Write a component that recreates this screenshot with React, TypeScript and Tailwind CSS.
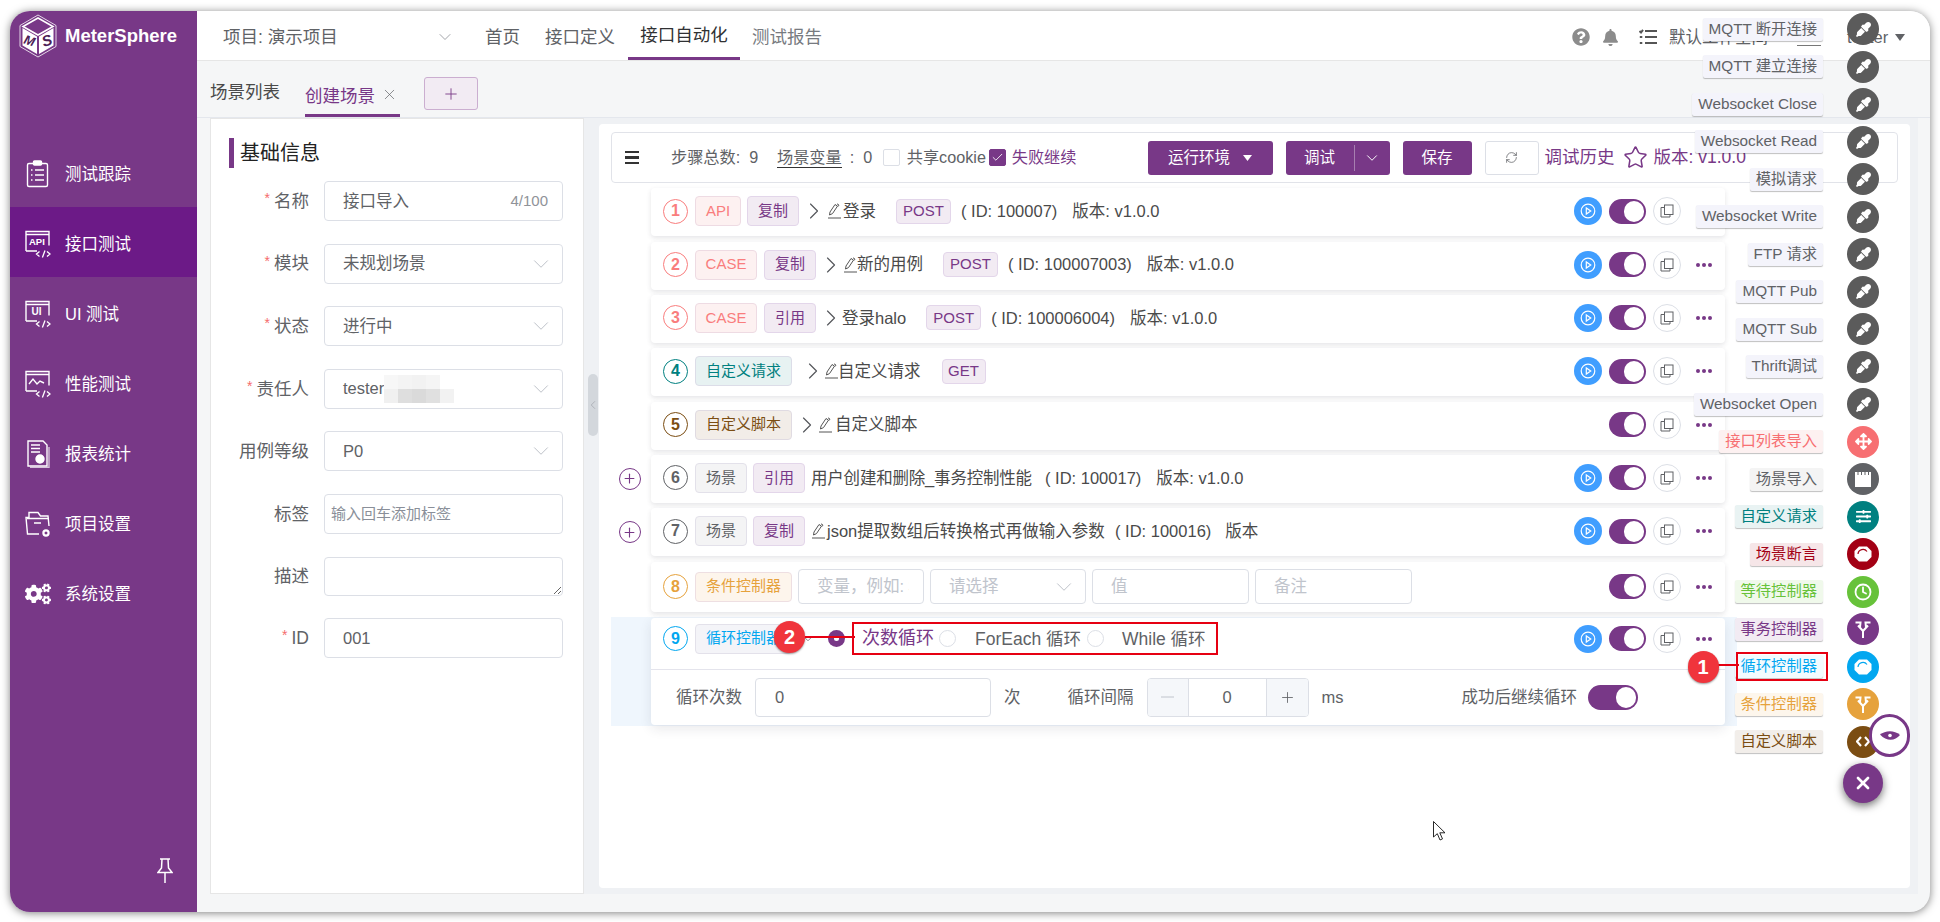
import type { ReactNode } from "react";
import { Check, ChevronDown, ChevronLeft, ChevronRight, Clock, Plus, RefreshCw, Star, X } from "lucide-react";
import { FaArrowsAlt, FaBell, FaCogs, FaEyeDropper, FaQuestionCircle, FaSlidersH } from "react-icons/fa";

const PURPLE = "#783887";

function Logo() {
  return (
    <svg width="40" height="44" viewBox="0 0 40 44" className="shrink-0">
      <polygon points="20,1 38,11.5 38,32.5 20,43 2,32.5 2,11.5" fill="none" stroke="#fff" strokeWidth="0.8" />
      <polygon points="20,4 35,12.5 20,21 5,12.5" fill={PURPLE} stroke="#fff" strokeWidth="1.6" />
      <polygon points="4.5,14 19,22.5 19,40 4.5,31.5" fill="#fff" />
      <polygon points="35.5,14 21,22.5 21,40 35.5,31.5" fill="#fff" />
      <text x="6" y="31" fontSize="13" fontWeight="700" fontStyle="italic" fill="#4b2156" transform="rotate(18 11 27)">M</text>
      <text x="24" y="32" fontSize="15" fontWeight="700" fontStyle="italic" fill="#4b2156" transform="rotate(-18 28 27)">S</text>
    </svg>
  );
}

function CodeBox({ children }: { children: ReactNode }) {
  return (
    <svg width="26" height="28" viewBox="0 0 26 28" fill="none" stroke="#fff" className="shrink-0">
      <path d="M1 21V1.5h23v14M1 4.5h23M1 21h11" strokeWidth="1.4" />
      <path d="M14.5 21.5l-3 2.5 3 2.5M22 21.5l3 2.5-3 2.5M20 20.5l-2.6 7" strokeWidth="1.3" />
      {children}
    </svg>
  );
}

const navItems: { label: string; icon: ReactNode; active?: boolean }[] = [
  {
    label: "测试跟踪",
    icon: (
      <svg width="26" height="28" viewBox="0 0 26 28" fill="none" stroke="#fff" strokeWidth="1.4" className="shrink-0">
        <rect x="2.5" y="3.5" width="20" height="23" rx="1.5" />
        <rect x="8.5" y="1" width="8" height="4" rx="1" fill="#fff" />
        <path d="M6 10h1.5M6 15h1.5M6 20h1.5M10 10h9M10 15h9M10 20h9" />
      </svg>
    ),
  },
  {
    label: "接口测试",
    active: true,
    icon: (
      <CodeBox>
        <text x="4" y="14.5" fontSize="9.5" fontWeight="700" fill="#fff" stroke="none">API</text>
      </CodeBox>
    ),
  },
  {
    label: "UI 测试",
    icon: (
      <CodeBox>
        <text x="6.5" y="15" fontSize="10" fontWeight="700" fill="#fff" stroke="none">UI</text>
      </CodeBox>
    ),
  },
  {
    label: "性能测试",
    icon: (
      <CodeBox>
        <path d="M4 14l4-5 4 5 3-3 4 2" strokeWidth="1.4" />
      </CodeBox>
    ),
  },
  {
    label: "报表统计",
    icon: (
      <svg width="26" height="28" viewBox="0 0 26 28" fill="none" stroke="#fff" strokeWidth="1.4" className="shrink-0">
        <path d="M3 1h15l4 4v21H3z" />
        <path d="M6 5h9M6 8.5h9M6 12h9" />
        <path d="M24 7v20.5H5" strokeOpacity="0.7" />
        <circle cx="15" cy="19" r="4" fill="#fff" />
      </svg>
    ),
  },
  {
    label: "项目设置",
    icon: (
      <svg width="26" height="28" viewBox="0 0 26 28" fill="none" stroke="#fff" strokeWidth="1.4" className="shrink-0">
        <path d="M14 24H2.5L1 7.5h3V2.5h9l2.5 3.5H23l1 10" />
        <path d="M2 8.5h22M9 13h7" />
        <circle cx="21" cy="23" r="2.6" strokeWidth="2.2" />
      </svg>
    ),
  },
  { label: "系统设置", icon: <FaCogs size={26} className="shrink-0 text-white" /> },
];

function Sidebar() {
  return (
    <aside className="flex h-full w-[187px] shrink-0 flex-col bg-[#783887] text-white">
      <div className="flex h-[50px] items-center pl-[8px]">
        <Logo />
        <span className="ml-[7px] text-[18.5px] leading-none font-bold">MeterSphere</span>
      </div>
      <nav className="mt-[76px] flex flex-col">
        {navItems.map((item) => (
          <div
            key={item.label}
            className={`flex h-[70px] items-center pt-[4px] pl-[15px] text-[16.5px] ${item.active ? "bg-[#6c1a87]" : ""}`}
          >
            {item.icon}
            <span className="ml-[14px]">{item.label}</span>
          </div>
        ))}
      </nav>
      <div className="mt-auto mr-[24px] mb-[29px] self-end">
        <svg width="16" height="25" viewBox="0 0 16 25" fill="none" stroke="#fff" strokeWidth="1.5">
          <path d="M3 1h10M5 1l-.5 9L1 14.5h14L11.5 10 11 1M8 14.5V25" />
        </svg>
      </div>
    </aside>
  );
}

function TopBar() {
  return (
    <header className="flex h-[50px] shrink-0 items-center border-b border-[#e6e6e6] bg-white pt-[3px] text-[17.5px] text-[#606266]">
      <div className="ml-[26px] flex w-[227px] items-center justify-between">
        <span>项目: 演示项目</span>
        <ChevronDown size={20} strokeWidth={1} className="mr-[-5px] text-[#909399]" />
      </div>
      <span className="ml-[35px]">首页</span>
      <span className="ml-[25px]">接口定义</span>
      <div className="ml-[13px] flex h-full w-[112px] items-center justify-center border-b-[3px] border-[#783887] text-[#303133]">
        接口自动化
      </div>
      <span className="ml-[12px] text-[#777a80]">测试报告</span>
      <FaQuestionCircle size={18} className="ml-[750px] text-[#8c8c8c]" />
      <FaBell size={17} className="ml-[12px] text-[#8c8c8c]" />
      <svg width="18" height="16" viewBox="0 0 18 16" className="ml-[20px]" fill="none" stroke="#555" strokeWidth="2">
        <path d="M6 2h12M6 8h12M6 14h12M0.5 2l1.5 1.5L4 .8M.8 8h2.5M.8 14h2.5" />
      </svg>
      <span className="ml-[12px] text-[16.5px]">默认工作空间</span>
      <div className="mt-[16px] ml-[29px] h-[1px] w-[24px] bg-[#777]" />
      <span className="ml-[26px] text-[16.5px]">tester</span>
      <svg width="10" height="7" viewBox="0 0 10 7" className="ml-[7px]" fill="#606266">
        <path d="M0 0h10L5 7z" />
      </svg>
    </header>
  );
}

function Tabs() {
  return (
    <div className="flex h-[57px] shrink-0 items-end border-b border-[#e4e7ed] text-[17.5px]">
      <span className="mb-[12px] ml-[13px] text-[#4a4a4a]">场景列表</span>
      <div className="ml-[25px] flex h-[45px] w-[95px] items-center border-b-[3px] border-[#783887] text-[#783887]">
        <span className="mt-[6px]">创建场景</span>
        <X size={17} strokeWidth={1} className="mt-[2px] ml-[6px] text-[#606266]" />
      </div>
      <div className="mb-[7px] ml-[24px] flex h-[33px] w-[54px] items-center justify-center rounded-[3px] border border-[#cbaed0] bg-[#f2ebf3] text-[#783887]">
        <Plus size={18} strokeWidth={1.2} />
      </div>
    </div>
  );
}

function Field({ label, required, children }: { label: string; required?: boolean; children: ReactNode }) {
  return (
    <div className="flex h-[40px] items-center">
      <div className="flex w-[98px] items-center justify-end text-[17.5px] text-[#606266]">
        {required && <span className="mt-[-5px] mr-[4px] text-[14px] text-[#f56c6c]">*</span>}
        {label}
      </div>
      <div className="ml-[15px] flex h-full w-[239px] items-center rounded-[4px] border border-[#dcdfe6] bg-white pr-[14px] pl-[18px] text-[16.5px] text-[#606266]">
        {children}
      </div>
    </div>
  );
}

function SelectText({ children }: { children: ReactNode }) {
  return (
    <>
      <span className="flex flex-1 items-center">{children}</span>
      <ChevronDown size={26} strokeWidth={0.8} className="mr-[-6px] shrink-0 text-[#b4b8c0]" />
    </>
  );
}

function BasicInfo() {
  return (
    <section className="h-[776px] w-[374px] shrink-0 border border-[#e6e6e6] bg-white">
      <div className="mt-[19px] ml-[18px] flex h-[30px] items-center">
        <div className="h-full w-[5px] bg-[#783887]" />
        <span className="ml-[6px] text-[20px] text-[#222]">基础信息</span>
      </div>
      <div className="mt-[13px] flex flex-col gap-[22.6px]">
        <Field label="名称" required>
          <span className="flex-1">接口导入</span>
          <span className="text-[15px] text-[#909399]">4/100</span>
        </Field>
        <Field label="模块" required>
          <SelectText>未规划场景</SelectText>
        </Field>
        <Field label="状态" required>
          <SelectText>进行中</SelectText>
        </Field>
        <Field label="责任人" required>
          <SelectText>
            tester
            <span className="grid h-[28px] w-[70px] grid-cols-5 grid-rows-2">
              <i className="bg-[#f7f7f7]" />
              <i className="bg-[#f4f4f4]" />
              <i className="bg-[#f2f2f2]" />
              <i className="bg-[#f5f5f5]" />
              <i className="bg-white" />
              <i className="bg-[#f0f0f0]" />
              <i className="bg-[#dedede]" />
              <i className="bg-[#dadada]" />
              <i className="bg-[#e0e0e0]" />
              <i className="bg-[#f2f2f2]" />
            </span>
          </SelectText>
        </Field>
        <Field label="用例等级">
          <SelectText>P0</SelectText>
        </Field>
        <div className="flex h-[40px] items-center">
          <div className="w-[98px] text-right text-[17.5px] text-[#606266]">标签</div>
          <div className="ml-[15px] flex h-full w-[239px] items-center rounded-[4px] border border-[#dcdfe6] pl-[6px] text-[15px] text-[#8a8f99]">
            输入回车添加标签
          </div>
        </div>
        <div className="flex h-[39px] items-center">
          <div className="w-[98px] text-right text-[17.5px] text-[#606266]">描述</div>
          <textarea className="ml-[15px] h-full w-[239px] rounded-[4px] border border-[#dcdfe6]" />
        </div>
        <Field label="ID" required>
          001
        </Field>
      </div>
    </section>
  );
}

function Checkbox({ checked }: { checked?: boolean }) {
  return (
    <span
      className={`flex h-[17px] w-[17px] shrink-0 items-center justify-center rounded-[2px] border ${
        checked ? "border-[#783887] bg-[#783887]" : "border-[#dcdfe6] bg-white"
      }`}
    >
      {checked && <Check size={13} strokeWidth={1.6} className="text-white" />}
    </span>
  );
}

function Toolbar() {
  return (
    <div className="flex h-[51px] w-[1287px] items-center rounded-[4px] border border-[#e1e3e9] text-[16.2px] whitespace-nowrap text-[#606266]">
      <div className="ml-[13px] flex w-[14px] flex-col gap-[3px]">
        <div className="h-[2.5px] bg-[#333]" />
        <div className="h-[2.5px] bg-[#333]" />
        <div className="h-[2.5px] bg-[#333]" />
      </div>
      <span className="ml-[32px] w-[91px]">步骤总数:&nbsp; 9</span>
      <span className="ml-[15px] border-b border-[#333] leading-[20px]">场景变量</span>
      <span className="ml-[8px] w-[22px]">:&nbsp; 0</span>
      <span className="ml-[11px]">
        <Checkbox />
      </span>
      <span className="ml-[7px] w-[79px]">共享cookie</span>
      <span className="ml-[3px]">
        <Checkbox checked />
      </span>
      <span className="ml-[6px] text-[#783887]">失败继续</span>
      <div className="ml-[71px] flex h-[34px] w-[125px] items-center justify-center rounded-[3px] bg-[#783887] text-[15.5px] text-white">
        运行环境
        <svg width="9" height="6" viewBox="0 0 9 6" className="ml-[13px]" fill="#fff">
          <path d="M0 0h9L4.5 6z" />
        </svg>
      </div>
      <div className="ml-[13px] flex h-[34px] w-[104px] items-center rounded-[3px] bg-[#783887] text-[15.5px] text-white">
        <span className="w-[68px] text-center">调试</span>
        <div className="h-[26px] w-px bg-[#a77fb0]" />
        <ChevronDown size={18} strokeWidth={1.3} className="ml-[8px]" />
      </div>
      <div className="ml-[13px] flex h-[34px] w-[69px] items-center justify-center rounded-[3px] bg-[#783887] text-[15.5px] text-white">
        保存
      </div>
      <div className="ml-[13px] flex h-[34px] w-[54px] items-center justify-center rounded-[3px] border border-[#dcdfe6]">
        <RefreshCw size={13} strokeWidth={1.4} className="text-[#606266]" />
      </div>
      <span className="ml-[6px] text-[17.5px] text-[#783887]">调试历史</span>
      <Star size={25} strokeWidth={1.5} className="ml-[8px] text-[#783887]" />
      <span className="ml-[6px] text-[17.5px] text-[#783887]">版本: v1.0.0</span>
    </div>
  );
}

type TagTone = "red" | "purple" | "teal" | "brown" | "gray" | "orange" | "blue";

const tagTones: Record<TagTone, string> = {
  red: "bg-[#fdf1f1] border-[#eedbe3] text-[#f97d7d]",
  purple: "bg-[#f2ebf3] border-[#e3d6ea] text-[#783887]",
  teal: "bg-[#e7f2f2] border-[#dcdde8] text-[#008080]",
  brown: "bg-[#f2ede8] border-[#e0dbe2] text-[#7b4d12]",
  gray: "bg-[#f4f4f5] border-[#e3e1ea] text-[#606266]",
  orange: "bg-[#fdf5ec] border-[#eedfe2] text-[#e6a23c]",
  blue: "bg-[#f4f4f8] border-[#e3e1ea] text-[#02a7f0]",
};

function Tag({ tone, w, className = "", children }: { tone: TagTone; w: string; className?: string; children: ReactNode }) {
  return (
    <span
      className={`flex h-[30px] shrink-0 items-center justify-center rounded-[4px] border text-[15px] whitespace-nowrap ${tagTones[tone]} ${w} ${className}`}
    >
      {children}
    </span>
  );
}

function Num({ n, color }: { n: number; color: string }) {
  return (
    <span
      className={`flex h-[25px] w-[25px] shrink-0 items-center justify-center rounded-full border text-[16px] font-bold ${color}`}
    >
      {n}
    </span>
  );
}

// lucide chevron has a lot of air round it, so pull the box in with a negative margin
function Arrow({ className = "" }: { className?: string }) {
  return <ChevronRight size={28} strokeWidth={1} className={`mr-[-10.5px] shrink-0 text-[#55575c] ${className}`} />;
}

function Pencil({ className = "" }: { className?: string }) {
  return (
    <svg width="13" height="16" viewBox="0 0 13 16" fill="none" stroke="#555" strokeWidth="1" className={`shrink-0 ${className}`}>
      <path d="M1.5 12l.5-3 5-7.5 2.5 1.6-5 7.5zM9 .8l2 1.3-1 1.4M0 15h13" />
    </svg>
  );
}

function Method({ children, w, className = "" }: { children: ReactNode; w: string; className?: string }) {
  return (
    <span
      className={`flex h-[25px] shrink-0 items-center justify-center rounded-[4px] border border-[#e3d6ea] bg-[#f2ebf3] text-[15px] text-[#783887] ${w} ${className}`}
    >
      {children}
    </span>
  );
}

function Toggle({ wide }: { wide?: boolean }) {
  return (
    <span
      className={`flex h-[25px] shrink-0 items-center justify-end rounded-full bg-[#783887] pr-[2px] ${wide ? "w-[50px]" : "w-[37px]"}`}
    >
      <span className="h-[21px] w-[20px] rounded-full bg-white" />
    </span>
  );
}

function Actions({ play = true }: { play?: boolean }) {
  return (
    <div className="ml-auto flex items-center pr-[13px]">
      {play && (
        <span className="flex h-[28px] w-[28px] items-center justify-center rounded-full bg-[#409eff]">
          <svg width="16" height="16" viewBox="0 0 16 16" fill="none" stroke="#fff" strokeWidth="1.2">
            <circle cx="8" cy="8" r="6.8" />
            <path d="M6.3 5v6l4.4-3z" />
          </svg>
        </span>
      )}
      <span className="ml-[7px]">
        <Toggle />
      </span>
      <span className="ml-[7px] flex h-[28px] w-[28px] items-center justify-center rounded-full border border-[#dcdfe6] bg-white">
        <svg width="14" height="14" viewBox="0 0 14 14" fill="none" stroke="#606266" strokeWidth="1">
          <rect x="4.5" y="1" width="8.5" height="9.5" />
          <path d="M4.5 3.5H1V13h9v-2.5" />
        </svg>
      </span>
      <span className="ml-[15px] flex w-[16px] justify-between">
        <i className="h-[4px] w-[4px] rounded-full bg-[#783887]" />
        <i className="h-[4px] w-[4px] rounded-full bg-[#783887]" />
        <i className="h-[4px] w-[4px] rounded-full bg-[#783887]" />
      </span>
    </div>
  );
}

function StepRow({ h, plus, children }: { h: string; plus?: boolean; children: ReactNode }) {
  return (
    <div className="mt-[5.33px] flex items-center">
      <div className="flex w-[40px] justify-center pr-[3px]">
        {plus && (
          <span className="flex h-[22px] w-[22px] items-center justify-center rounded-full border border-[#783887] text-[#783887]">
            <Plus size={15} strokeWidth={1.8} />
          </span>
        )}
      </div>
      <div
        className={`flex w-[1074px] items-center rounded-[4px] bg-white pl-[12px] text-[16.5px] whitespace-nowrap text-[#4a4a4a] shadow-[0_2px_5px_rgba(40,40,60,0.12)] ${h}`}
      >
        {children}
      </div>
    </div>
  );
}

function GhostInput({ w, children }: { w: string; children?: ReactNode }) {
  return (
    <div className={`ml-[6px] flex h-[35px] items-center rounded-[4px] border border-[#dcdfe6] pr-[14px] pl-[18px] text-[#c0c4cc] ${w}`}>
      {children}
    </div>
  );
}

function Steps() {
  return (
    <>
      <StepRow h="h-[48px] pb-[2px]">
        <Num n={1} color="border-[#f97d7d] text-[#f97d7d]" />
        <Tag tone="red" w="w-[46px]" className="ml-[7px]">API</Tag>
        <Tag tone="purple" w="w-[52px]" className="ml-[6px]">复制</Tag>
        <Arrow className="ml-[0.5px]" />
        <Pencil className="ml-[11px]" />
        <span className="ml-[2px]">登录</span>
        <Method w="w-[55px]" className="ml-[20px]">POST</Method>
        <span className="ml-[10px]">( ID: 100007)</span>
        <span className="ml-[15px]">版本: v1.0.0</span>
        <Actions />
      </StepRow>
      <StepRow h="h-[48px] pb-[2px]">
        <Num n={2} color="border-[#f97d7d] text-[#f97d7d]" />
        <Tag tone="red" w="w-[62px]" className="ml-[7px]">CASE</Tag>
        <Tag tone="purple" w="w-[52px]" className="ml-[7px]">复制</Tag>
        <Arrow className="ml-[0.5px]" />
        <Pencil className="ml-[10px]" />
        <span>新的用例</span>
        <Method w="w-[55px]" className="ml-[20px]">POST</Method>
        <span className="ml-[10px]">( ID: 100007003)</span>
        <span className="ml-[15px]">版本: v1.0.0</span>
        <Actions />
      </StepRow>
      <StepRow h="h-[48px] pb-[2px]">
        <Num n={3} color="border-[#f97d7d] text-[#f97d7d]" />
        <Tag tone="red" w="w-[62px]" className="ml-[7px]">CASE</Tag>
        <Tag tone="purple" w="w-[52px]" className="ml-[7px]">引用</Tag>
        <Arrow className="ml-[0.5px]" />
        <span className="ml-[8px]">登录halo</span>
        <Method w="w-[55px]" className="ml-[20px]">POST</Method>
        <span className="ml-[10px]">( ID: 100006004)</span>
        <span className="ml-[15px]">版本: v1.0.0</span>
        <Actions />
      </StepRow>
      <StepRow h="h-[48px] pb-[2px]">
        <Num n={4} color="border-[#008080] text-[#008080]" />
        <Tag tone="teal" w="w-[97px]" className="ml-[7px]">自定义请求</Tag>
        <Arrow className="ml-[6.5px]" />
        <Pencil className="ml-[9px]" />
        <span>自定义请求</span>
        <Method w="w-[44px]" className="ml-[21px]">GET</Method>
        <Actions />
      </StepRow>
      <StepRow h="h-[48px] pb-[2px]">
        <Num n={5} color="border-[#7b4d12] text-[#7b4d12]" />
        <Tag tone="brown" w="w-[97px]" className="ml-[7px]">自定义脚本</Tag>
        <Arrow className="ml-[0.5px]" />
        <Pencil className="ml-[9px]" />
        <span className="ml-[3px]">自定义脚本</span>
        <Actions play={false} />
      </StepRow>
      <StepRow h="h-[48px] pb-[2px]" plus>
        <Num n={6} color="border-[#606266] text-[#606266]" />
        <Tag tone="gray" w="w-[52px]" className="ml-[7px]">场景</Tag>
        <Tag tone="purple" w="w-[52px]" className="ml-[6px]">引用</Tag>
        <span className="ml-[6px] w-[220px] tracking-[-0.2px]">用户创建和删除_事务控制性能</span>
        <span className="ml-[14px]">( ID: 100017)</span>
        <span className="ml-[15px]">版本: v1.0.0</span>
        <Actions />
      </StepRow>
      <StepRow h="h-[48px] pb-[2px]" plus>
        <Num n={7} color="border-[#606266] text-[#606266]" />
        <Tag tone="gray" w="w-[52px]" className="ml-[7px]">场景</Tag>
        <Tag tone="purple" w="w-[52px]" className="ml-[6px]">复制</Tag>
        <Pencil className="ml-[7px]" />
        <span className="ml-[2px] w-[274px]">json提取数组后转换格式再做输入参数</span>
        <span className="ml-[14px]">( ID: 100016)</span>
        <span className="ml-[14px]">版本</span>
        <Actions />
      </StepRow>
      <StepRow h="h-[50px]">
        <Num n={8} color="border-[#e6a23c] text-[#e6a23c]" />
        <Tag tone="orange" w="w-[97px]" className="ml-[7px]">条件控制器</Tag>
        <GhostInput w="w-[126px]">
          <span className="w-[92px] overflow-hidden">变量，例如: $</span>
        </GhostInput>
        <GhostInput w="w-[156px]">
          <span className="flex-1">请选择</span>
          <ChevronDown size={26} strokeWidth={0.8} className="mr-[-6px] shrink-0 text-[#b4b8c0]" />
        </GhostInput>
        <GhostInput w="w-[157px]">值</GhostInput>
        <GhostInput w="w-[157px]">备注</GhostInput>
        <Actions play={false} />
      </StepRow>
      <LoopRow />
    </>
  );
}

function Radio({ className = "" }: { className?: string }) {
  return <span className={`h-[17px] w-[17px] shrink-0 rounded-full border border-[#dcdfe6] bg-white ${className}`} />;
}

function LoopRow() {
  return (
    <div className="mt-[5px] flex h-[109px] w-[1126px] items-center bg-[#eff6fd]">
      <div className="w-[40px]" />
      <div className="relative h-[107px] w-[1074px] rounded-[4px] bg-white text-[16.5px] whitespace-nowrap text-[#606266] shadow-[0_4px_12px_rgba(40,40,60,0.1)]">
        <div className="flex h-[52px] items-center border-b border-[#e4e4ec] pb-[9px] pl-[12px]">
          <Num n={9} color="border-[#02a7f0] text-[#02a7f0]" />
          <Tag tone="blue" w="w-[97px]" className="ml-[7px] justify-start pl-[10px]">循环控制器</Tag>
          <ChevronDown size={14} strokeWidth={1.3} className="ml-[9px] text-[#606266]" />
          <span className="ml-[13px] flex h-[17px] w-[17px] items-center justify-center rounded-full bg-[#783887]">
            <i className="h-[5px] w-[5px] rounded-full bg-white" />
          </span>
          <div className="ml-[7px] flex h-[33px] w-[366px] items-center border-2 border-[#e60012] pl-[8px] text-[17.5px]">
            <span className="text-[18px] text-[#783887]">次数循环</span>
            <Radio className="ml-[5px]" />
            <span className="ml-[19px]">ForEach 循环</span>
            <Radio className="ml-[6px]" />
            <span className="ml-[18px]">While 循环</span>
          </div>
          <Actions />
        </div>
        <div className="flex h-[55px] items-center">
          <span className="ml-[25px]">循环次数</span>
          <div className="ml-[13px] flex h-[39px] w-[236px] items-center rounded-[4px] border border-[#dcdfe6] pl-[19px]">0</div>
          <span className="ml-[13px]">次</span>
          <span className="ml-[47px]">循环间隔</span>
          <div className="ml-[13px] flex h-[39px] w-[162px] items-center overflow-hidden rounded-[4px] border border-[#dcdfe6]">
            <div className="flex h-full w-[41px] items-center justify-center border-r border-[#dcdfe6] bg-[#f5f7fa] text-[#c0c4cc]">
              <svg width="13" height="2"><path d="M0 1h13" stroke="#c0c4cc" /></svg>
            </div>
            <div className="flex-1 text-center">0</div>
            <div className="flex h-full w-[42px] items-center justify-center border-l border-[#dcdfe6] bg-[#f5f7fa]">
              <Plus size={17} strokeWidth={1.2} />
            </div>
          </div>
          <span className="ml-[13px]">ms</span>
          <span className="ml-[118px]">成功后继续循环</span>
          <span className="ml-[11px]">
            <Toggle wide />
          </span>
        </div>
        <div className="absolute top-[3px] left-[123px] flex items-center">
          <span className="flex h-[32px] w-[31px] items-center justify-center rounded-full bg-[#f0343c] text-[20px] font-bold text-white shadow-[0_1px_2px_rgba(0,0,0,0.4)]">2</span>
          <span className="h-[2px] w-[50px] bg-[#e60012]" />
        </div>
      </div>
    </div>
  );
}

const fork = (
  <svg width="16" height="18" viewBox="0 0 16 18" fill="none" stroke="#fff" strokeWidth="2">
    <path d="M8 18v-7L3 5.500M8 11l5-5.500M.5 2.500h5l-.5 5M15.500 2.500h-5l.5 5" />
  </svg>
);

function gauge(color: string) {
  return (
    <svg width="18" height="16" viewBox="0 0 18 16">
      <path d="M5 .5h8l4.500 4.500v6L13 15.500H5L.5 11V5z" fill="#fff" />
      <path d="M4 8a5 5 0 0 1 9-2.500" fill="none" stroke={color} strokeWidth="1.2" />
    </svg>
  );
}

const dropper = <FaEyeDropper size={15} className="text-white" />;

const fabs: { label: string; text: string; bg: string; circle: string; icon: ReactNode; focus?: boolean }[] = [
  { label: "MQTT 断开连接", text: "text-[#606266]", bg: "bg-[#f4f4fb]", circle: "bg-[#5b5b5b]", icon: dropper },
  { label: "MQTT 建立连接", text: "text-[#606266]", bg: "bg-[#f4f4fb]", circle: "bg-[#5b5b5b]", icon: dropper },
  { label: "Websocket Close", text: "text-[#606266]", bg: "bg-[#f4f4fb]", circle: "bg-[#5b5b5b]", icon: dropper },
  { label: "Websocket Read", text: "text-[#606266]", bg: "bg-[#f4f4fb]", circle: "bg-[#5b5b5b]", icon: dropper },
  { label: "模拟请求", text: "text-[#606266]", bg: "bg-[#f4f4fb]", circle: "bg-[#5b5b5b]", icon: dropper },
  { label: "Websocket Write", text: "text-[#606266]", bg: "bg-[#f4f4fb]", circle: "bg-[#5b5b5b]", icon: dropper },
  { label: "FTP 请求", text: "text-[#606266]", bg: "bg-[#f4f4fb]", circle: "bg-[#5b5b5b]", icon: dropper },
  { label: "MQTT Pub", text: "text-[#606266]", bg: "bg-[#f4f4fb]", circle: "bg-[#5b5b5b]", icon: dropper },
  { label: "MQTT Sub", text: "text-[#606266]", bg: "bg-[#f4f4fb]", circle: "bg-[#5b5b5b]", icon: dropper },
  { label: "Thrift调试", text: "text-[#606266]", bg: "bg-[#f4f4fb]", circle: "bg-[#5b5b5b]", icon: dropper },
  { label: "Websocket Open", text: "text-[#606266]", bg: "bg-[#f4f4fb]", circle: "bg-[#5b5b5b]", icon: dropper },
  { label: "接口列表导入", text: "text-[#f76f72]", bg: "bg-[#fdf1f1]", circle: "bg-[#f76f72]", icon: <FaArrowsAlt size={17} className="text-white" /> },
  {
    label: "场景导入",
    text: "text-[#606266]",
    bg: "bg-[#f4f4f4]",
    circle: "bg-[#606266]",
    icon: (
      <svg width="16" height="15" viewBox="0 0 16 15">
        <path d="M0 0h16v15H0z" fill="#fff" />
        <path d="M3 0v3M6.500 0v3M10 0v3M13.500 0v3" stroke="#606266" />
      </svg>
    ),
  },
  { label: "自定义请求", text: "text-[#008080]", bg: "bg-[#e9f3f3]", circle: "bg-[#008080]", icon: <FaSlidersH size={15} className="text-white" /> },
  { label: "场景断言", text: "text-[#a30014]", bg: "bg-[#f6e6e8]", circle: "bg-[#a30014]", icon: gauge("#a30014") },
  { label: "等待控制器", text: "text-[#67c23a]", bg: "bg-[#f0f9eb]", circle: "bg-[#67c23a]", icon: <Clock size={18} strokeWidth={2.4} className="text-white" /> },
  { label: "事务控制器", text: "text-[#783887]", bg: "bg-[#f2ebf3]", circle: "bg-[#783887]", icon: fork },
  { label: "循环控制器", text: "text-[#02a7f0]", bg: "bg-[#f3fbfe]", circle: "bg-[#02a7f0]", icon: gauge("#02a7f0"), focus: true },
  { label: "条件控制器", text: "text-[#e6a23c]", bg: "bg-[#fdf6ec]", circle: "bg-[#e6a23c]", icon: fork },
  {
    label: "自定义脚本",
    text: "text-[#7b4d12]",
    bg: "bg-[#f2eeea]",
    circle: "bg-[#7b4d12]",
    icon: (
      <svg width="14" height="11" viewBox="0 0 14 11" fill="none" stroke="#fff" strokeWidth="2.2">
        <path d="M5 1L1 5.500 5 10M9 1l4 4.500L9 10" />
      </svg>
    ),
  },
];

function FabMenu() {
  return (
    <>
      <div className="absolute top-[2px] right-[51px] flex flex-col items-end gap-[5.5px]">
        {fabs.map((fab) => (
          <div key={fab.label} className="flex h-[32px] items-center">
            <span
              className={`relative flex h-[23px] items-center rounded-[2px] px-[6px] text-[15.3px] shadow-[0_1px_1px_rgba(0,0,0,0.25)] ${fab.text} ${fab.bg}`}
            >
              {fab.label}
              {fab.focus && (
                <>
                  <span className="absolute top-[-3px] right-[-5px] bottom-[-3px] left-[1px] border-2 border-[#e60012]" />
                  <span className="absolute top-[9px] left-[-20px] h-[2px] w-[24px] bg-[#e60012]" />
                  <span className="absolute top-[-4px] left-[-47px] flex h-[32px] w-[31px] items-center justify-center rounded-full bg-[#f0343c] text-[20px] font-bold text-white shadow-[0_1px_2px_rgba(0,0,0,0.4)]">
                    1
                  </span>
                </>
              )}
            </span>
            <span className={`ml-[24px] flex h-[32px] w-[32px] items-center justify-center rounded-full ${fab.circle}`}>
              {fab.icon}
            </span>
          </div>
        ))}
      </div>
      <div className="absolute top-[703px] left-[1859px] flex h-[43px] w-[41px] items-center justify-center rounded-full border-[3px] border-[#783887] bg-white">
        <svg width="20" height="12" viewBox="0 0 20 12">
          <path d="M0 4.500C5 .5 14 -.5 20 5c-5 6-13 7-20-.5z" fill="#783887" />
          <circle cx="10" cy="5.500" r="1.800" fill="#fff" />
        </svg>
      </div>
      <div className="absolute top-[752px] left-[1833px] flex h-[40px] w-[40px] items-center justify-center rounded-full bg-[#783887] text-white shadow-[0_3px_8px_rgba(0,0,0,0.55)]">
        <X size={20} strokeWidth={3.2} />
      </div>
      <svg width="13" height="20" viewBox="0 0 13 20" className="absolute top-[810px] left-[1423px]" fill="#fff" stroke="#111" strokeWidth="0.9">
        <path d="M.5.5v15.500l3.800-3.300 2.700 6.300 2.500-1.100-2.700-6.100h5.200z" />
      </svg>
    </>
  );
}

export default function App() {
  return (
    <div className="h-[922px] w-[1940px] overflow-hidden bg-white pt-[11px] pl-[10px] [font-family:'Liberation_Sans','Noto_Sans_CJK_SC',sans-serif]">
      <div className="relative flex h-[901px] w-[1920px] overflow-hidden rounded-[20px] bg-[#f5f6f7] shadow-[0_1px_9px_rgba(0,0,0,0.5)]">
        <Sidebar />
        <main className="flex min-w-0 flex-1 flex-col">
          <TopBar />
          <Tabs />
          <div className="flex pl-[13px]">
            <BasicInfo />
            <div className="h-[776px] w-[1334px] bg-[#eff1f4]">
              <div className="flex h-full">
                <div className="mt-[256px] ml-[4px] flex h-[62px] w-[10px] items-center justify-center rounded-[5px] bg-[#d3d7dc] text-white">
                  <ChevronLeft size={14} strokeWidth={1.2} className="shrink-0 text-[#a0a4ab]" />
                </div>
                <div className="mt-[6px] ml-px h-[764px] w-[1311px] rounded-[4px] bg-white pt-[8px] pl-[12px]">
                  <Toolbar />
                  <Steps />
                </div>
              </div>
            </div>
          </div>
        </main>
        <FabMenu />
      </div>
    </div>
  );
}
